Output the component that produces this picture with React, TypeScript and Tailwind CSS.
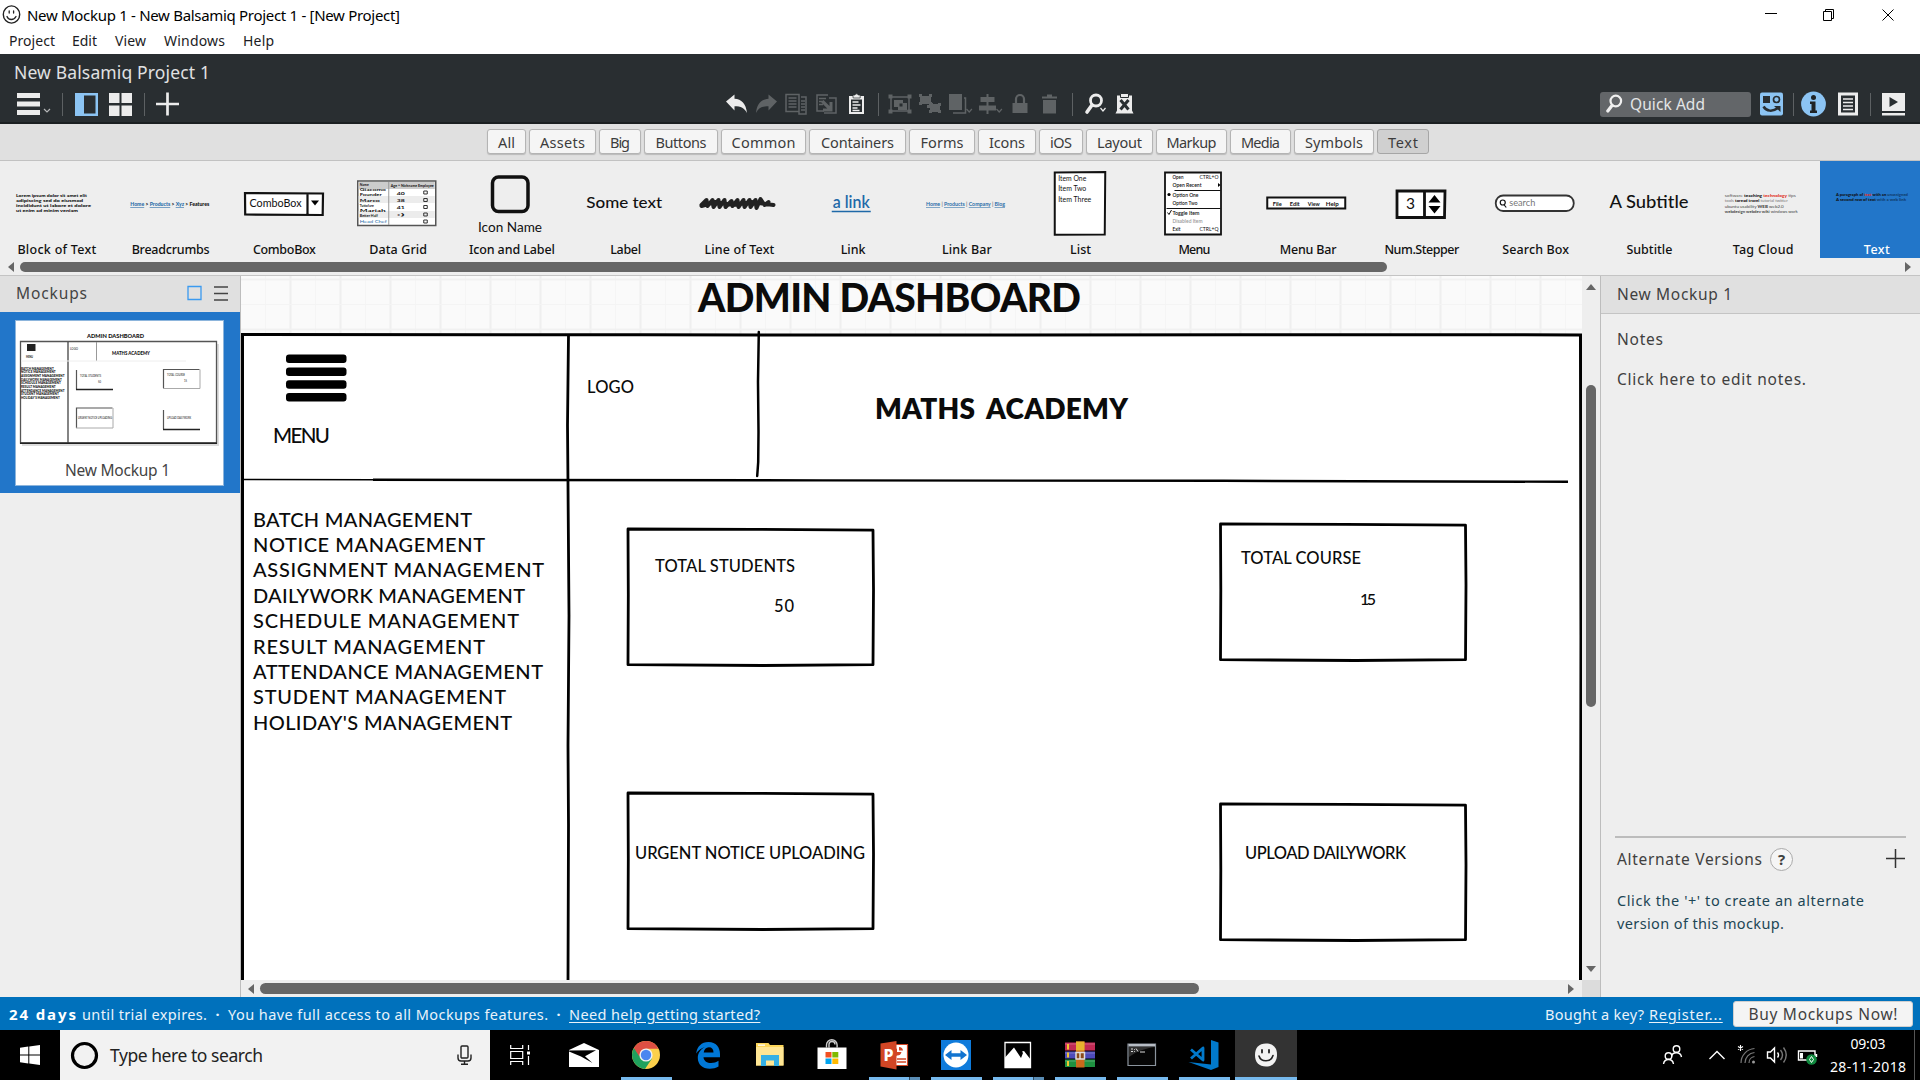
import React, { useLayoutEffect, useRef } from "react";

const UI = "font-['Noto_Sans',sans-serif]";
const SKETCH = "font-['Lato',sans-serif]";

/** Single line of text whose tracking is adjusted so that it spans `w` pixels. */
function Fit({ w, children, className = "" }: { w: number; children: string; className?: string }) {
  const ref = useRef<HTMLSpanElement>(null);
  useLayoutEffect(() => {
    const el = ref.current;
    if (!el) return;
    el.style.letterSpacing = "0px";
    const natural = el.getBoundingClientRect().width;
    const tracking = (w - natural) / Math.max(1, children.length - 1);
    el.style.letterSpacing = `${tracking}px`;
    el.style.marginRight = `${-tracking}px`;
  }, [w, children]);
  return (
    <span ref={ref} className={`inline-block shrink-0 whitespace-pre ${className}`}>
      {children}
    </span>
  );
}

function Cell({ children, w = 30 }: { children: React.ReactNode; w?: number }) {
  return (
    <svg width={w} height={26} viewBox={`0 0 ${w} 26`} className="shrink-0">
      {children}
    </svg>
  );
}

const Sep = ({ className = "" }: { className?: string }) => (
  <div className={`h-[23px] w-px shrink-0 bg-[#5d6163] ${className}`} />
);

const MENUS: [string, number, string][] = [
  ["Project", 46, "ml-[9px]"],
  ["Edit", 25, "ml-[17px]"],
  ["View", 31, "ml-[18px]"],
  ["Windows", 61, "ml-[18px]"],
  ["Help", 31, "ml-[18px]"],
];

function TitleBar() {
  return (
    <div className="flex h-[32px] items-center">
      <svg width="19" height="20" viewBox="0 0 19 20" className="ml-[2px] -mt-[2px]" fill="none" stroke="#222">
        <ellipse cx="9.5" cy="9.5" rx="8.2" ry="8.6" strokeWidth="1.4" />
        <path d="M5 11.5c1.5 4 7 4 9 0M7.2 6v2M11.6 6v2" strokeWidth="1.3" strokeLinecap="round" />
      </svg>
      <Fit w={373} className="ml-[6px] -mt-[3px] text-[15px] leading-[20px] text-black">
        New Mockup 1 - New Balsamiq Project 1 - [New Project]
      </Fit>
      <div className="ml-auto flex w-[155px] items-center">
        <svg width="155" height="28" viewBox="1765 0 155 28" fill="none" stroke="#000" strokeWidth="1">
          <path d="M1765 11.500h12M1823.500 9.500h8v9h-8zM1825.500 9v-1.500h8v9h-2M1882.500 7.500l11 11M1893.500 7.500l-11 11" />
        </svg>
      </div>
    </div>
  );
}

function MenuBar() {
  return (
    <div className="flex h-[22px] items-center text-[14px] leading-[18px] text-[#1c1c24]">
      {MENUS.map(([t, w, m]) => (
        <Fit key={t} w={w} className={`${m} -mt-[4px]`}>
          {t}
        </Fit>
      ))}
    </div>
  );
}

function LeftTools() {
  return (
    <div className="flex w-[722px] items-center">
      <svg width="35" height="26" viewBox="0 0 35 26" className="ml-[17px]">
        <path d="M0 2h23v5H0zM0 10.500h23v5H0zM0 19h23v5H0z" fill="#ececec" />
        <path d="M27 18l3 3 3-3" fill="none" stroke="#b5b7b8" strokeWidth="1.200" />
      </svg>
      <Sep className="ml-[10px]" />
      <svg width="23" height="26" viewBox="0 0 23 26" className="ml-[12px]">
        <path d="M0 2h23v23H0z" fill="#8cc4f3" />
        <path d="M9 4.500h11.500v18H9z" fill="#292e31" />
      </svg>
      <svg width="23" height="26" viewBox="0 0 23 26" className="ml-[11px]">
        <path d="M0 2h10.500v10H0zM12.500 2H23v10H12.500zM0 14.500h10.500v10.500H0zM12.500 14.500H23v10.500H12.500z" fill="#ececec" />
      </svg>
      <Sep className="ml-[12px]" />
      <svg width="23" height="26" viewBox="0 0 23 26" className="ml-[11px]">
        <path d="M0 13h23M11.500 1.500v23" stroke="#ececec" strokeWidth="2.700" />
      </svg>
    </div>
  );
}

function CenterTools() {
  const g = "#5f6365";
  const lt = "#ececec";
  return (
    <div className="flex items-center">
      <Cell>
        <path d="M4 10.500L12.500 3.500v4.300c7 .5 11.500 4.700 12.500 14.200-2.500-5-6-6.800-12.500-6.800v4.300z" fill={lt} />
      </Cell>
      <Cell>
        <path d="M25 10.500L16.500 3.500v4.300C9.500 8.300 5 12.500 4 22c2.500-5 6-6.800 12.500-6.800v4.300z" fill={g} />
      </Cell>
      <Cell>
        <path d="M4 3.500h13v17H4zM19 6h5v17h-7v-2" fill="none" stroke={g} strokeWidth="1.500" />
        <path d="M6.500 7h8M6.500 10h8M6.500 13h8M6.500 16h8M19 10h4M19 13h4M19 16h4M19 19h4" stroke={g} strokeWidth="1.500" />
      </Cell>
      <Cell>
        <path d="M16 4H5v16h7M17 7h7v15H12" fill="none" stroke={g} strokeWidth="1.500" />
        <path d="M7 7.500h7M7 10.500h5M7 13.500h4" stroke={g} strokeWidth="1.500" />
        <path d="M11.500 9l6 6v-4h3v9.500h-9.500v-3h4.300l-6-6z" fill={g} />
      </Cell>
      <Cell>
        <path d="M7 5h15v18H7z" fill={lt} />
        <path d="M11 6V4h2a1.700 1.700 0 013.200 0h2v3h-7z" fill={lt} stroke="#292e31" strokeWidth=".7" />
        <path d="M9 8.500h11v12.500H9z" fill="#292e31" />
        <path d="M10.500 11h6M10.500 14h8M10.500 17h5M10.500 19.500h7" stroke={lt} strokeWidth="1.500" />
      </Cell>
      <div className="flex w-[13px] justify-center">
        <Sep />
      </div>
      <Cell>
        <path d="M6 6h18v14H6z" fill="none" stroke={g} strokeWidth="1.500" />
        <path d="M3.500 3.500h4v4h-4zM22.500 3.500h4v4h-4zM3.500 18.500h4v4h-4zM22.500 18.500h4v4h-4zM9 9h9v3h4v7h-9v-3H9z" fill={g} />
        <path d="M14.500 12.500h3v3h-3z" fill="#292e31" />
      </Cell>
      <Cell>
        <path d="M4 3h3v2h7V3h3v3h-1v5h1v3h-3v-1H7v1H4v-3h1V6H4zM15 12h3v1h5v-1h3v3h-1v4h1v3h-3v-1h-6v1h-3v-3h1v-2h-3v-3h3z" fill={g} />
      </Cell>
      <Cell>
        <path d="M4 3h13v16H4z" fill={g} />
        <path d="M19 7h1.500v15H8" fill="none" stroke={g} strokeWidth="1.500" />
        <path d="M21.500 18l2.700 3 2.700-3" fill="none" stroke={g} strokeWidth="1.200" />
      </Cell>
      <Cell>
        <path d="M11.500 3h2v20h-2zM5.500 6h14v5h-14zM4 14.500h17v5H4z" fill={g} />
        <path d="M21.500 18l2.700 3 2.700-3" fill="none" stroke={g} strokeWidth="1.200" />
      </Cell>
      <Cell>
        <path d="M7.500 12h15v10h-15z" fill={g} />
        <path d="M11 13V8a4 4 0 018 0v5" fill="none" stroke={g} strokeWidth="2.200" />
      </Cell>
      <Cell>
        <path d="M8 9h13v13.500H8zM7 5.500h15v2H7zM12 3.500h5v2h-5z" fill={g} />
      </Cell>
      <div className="flex w-[15px] justify-center">
        <Sep />
      </div>
      <Cell>
        <circle cx="16" cy="9.500" r="5.500" fill="none" stroke={lt} strokeWidth="2.800" />
        <path d="M12 14L7 21" stroke={lt} strokeWidth="3.600" strokeLinecap="round" />
        <path d="M20.500 17l2.500 3 2.500-3" fill="none" stroke={lt} strokeWidth="1.200" />
      </Cell>
      <Cell>
        <path d="M7 4.500h15v15l1.500 3h-18l1.500-3z" fill={lt} />
        <path d="M10.500 2.500h8v4h-8z" fill={lt} stroke="#292e31" />
        <path d="M10.500 9l8 9.500M18.500 9l-8 9.500" stroke="#292e31" strokeWidth="3" />
      </Cell>
    </div>
  );
}

function RightTools() {
  return (
    <div className="ml-auto flex items-center pr-[15px]">
      <div className="flex h-[25px] w-[151px] items-center rounded-[3px] bg-[#636669]">
        <svg width="17" height="20" viewBox="0 0 17 20" className="ml-[6px]" fill="none" stroke="#f0f0f0">
          <circle cx="9.800" cy="7" r="5.300" strokeWidth="2.200" />
          <path d="M6 11.500L1.800 17" strokeWidth="3.200" strokeLinecap="round" />
        </svg>
        <Fit w={75} className="ml-[7px] text-[15.500px] leading-[20px] text-[#e4e5e6]">
          Quick Add
        </Fit>
      </div>
      <svg width="23" height="26" viewBox="0 0 23 26" className="ml-[9px]">
        <rect y="1.500" width="23" height="23" rx="2" fill="#8cc4f3" />
        <path d="M3 5h7v7H3z" fill="#292e31" />
        <circle cx="16.500" cy="8.500" r="3" fill="none" stroke="#292e31" strokeWidth="1.700" />
        <path d="M3.500 15.500c3 5 9 5.500 14.500 1.500" fill="none" stroke="#292e31" strokeWidth="2.500" />
        <path d="M14 15h6.500v6z" fill="#292e31" />
      </svg>
      <Sep className="ml-[10px]" />
      <svg width="25" height="26" viewBox="0 0 25 26" className="ml-[7px]">
        <circle cx="12.500" cy="13" r="12.400" fill="#8cc4f3" />
        <circle cx="12.500" cy="6.500" r="2.500" fill="#1f2325" />
        <path d="M9 10.500h5.500v9H16V22H9v-2.500h1.500v-6.500H9z" fill="#1f2325" />
      </svg>
      <svg width="20" height="26" viewBox="0 0 20 26" className="ml-[12px]">
        <path d="M0 1.500h20v23H0z" fill="#ececec" />
        <path d="M3 4.500h14v17H3z" fill="#292e31" />
        <path d="M5 8h10M5 11.500h10M5 15h10M5 18.500h10" stroke="#ececec" strokeWidth="1.600" />
      </svg>
      <Sep className="ml-[12px]" />
      <svg width="23" height="26" viewBox="0 0 23 26" className="ml-[11px]">
        <path d="M0 2h23v18H0zM0 22h23v2.500H0z" fill="#ececec" />
        <path d="M7.500 6l8.500 5-8.500 5z" fill="#292e31" />
      </svg>
    </div>
  );
}

const FILTERS: [string, string, number][] = [
  ["All", "w-[39px]", 17],
  ["Assets", "w-[67px]", 45],
  ["Big", "w-[42px]", 20],
  ["Buttons", "w-[74px]", 51],
  ["Common", "w-[85px]", 64],
  ["Containers", "w-[97px]", 73],
  ["Forms", "w-[66px]", 43],
  ["Icons", "w-[58px]", 36],
  ["iOS", "w-[44px]", 22],
  ["Layout", "w-[67px]", 45],
  ["Markup", "w-[71px]", 50],
  ["Media", "w-[61px]", 39],
  ["Symbols", "w-[80px]", 58],
  ["Text", "w-[52px]", 30],
];

function FilterBar() {
  return (
    <div className="flex h-[37px] items-start justify-center gap-[3px] border-b border-[#c2c2c2] bg-[#e0e0e0] pt-[5px] pr-[4px]">
      {FILTERS.map(([t, c, w]) => (
        <div
          key={t}
          className={`flex h-[25px] shrink-0 items-center justify-center rounded-[3px] border text-[14.500px] leading-[18px] text-[#3c3c3c] ${c} ${
            t === "Text" ? "border-[#a6a6a6] bg-[#d0d0d0]" : "border-[#b4b4b4] bg-[#f5f5f5] shadow-[0_1px_1px_#bbb]"
          }`}
        >
          <Fit w={w}>{t}</Fit>
        </div>
      ))}
    </div>
  );
}

function SvgText({
  x, y, w, s, children, fill = "#111", weight = 400,
}: { x: number; y: number; w: number; s: number; children: React.ReactNode; fill?: string; weight?: number }) {
  return (
    <text x={x} y={y} textLength={w} lengthAdjust="spacingAndGlyphs" fontSize={s} fill={fill} fontWeight={weight} className={SKETCH}>
      {children}
    </text>
  );
}

const PALETTE: { name: string; w: number; art: React.ReactNode }[] = [
  {
    name: "Block of Text", w: 79,
    art: (
      <>
        <SvgText x={16} y={196.500} w={71} s={4.500} weight={900}>Lorem ipsum dolor sit amet elit</SvgText>
        <SvgText x={16} y={202} w={67} s={4.500} weight={900}>adipiscing sed do eiusmod</SvgText>
        <SvgText x={16} y={207} w={75} s={4.500} weight={900}>incididunt ut labore et dolore</SvgText>
        <SvgText x={16} y={212} w={62} s={4.500} weight={900}>ut enim ad minim veniam</SvgText>
      </>
    ),
  },
  {
    name: "Breadcrumbs", w: 78,
    art: (
      <SvgText x={130} y={206} w={79} s={6} weight={900}>
        <tspan fill="#2a6da8" textDecoration="underline">Home</tspan> &gt; <tspan fill="#2a6da8" textDecoration="underline">Products</tspan> &gt;{" "}
        <tspan fill="#2a6da8" textDecoration="underline">Xyz</tspan> &gt; Features
      </SvgText>
    ),
  },
  {
    name: "ComboBox", w: 63,
    art: (
      <>
        <path d="M244.500 193l78 .5-.3 21.500-77.500-.5zM307 193v22" fill="#fff" stroke="#111" strokeWidth="2.200" />
        <SvgText x={249} y={207} w={52} s={12}>ComboBox</SvgText>
        <path d="M310.500 200.500h8l-4 5z" />
      </>
    ),
  },
  {
    name: "Data Grid", w: 58,
    art: (
      <>
        <path d="M358 181h78v44.500h-78z" fill="#fff" stroke="#555" strokeWidth="1.500" />
        <path d="M359 182h76v7h-76z" fill="#ccc" />
        <path d="M359 196h76v7h-76zM359 211h76v7h-76z" fill="#ececec" />
        <path d="M389 182v43" stroke="#999" />
        {["Name", "Giacomo", "Founder", "Marco", "Tuttofare", "Mariah", "Better Half"].map((t, i) => (
          <SvgText key={t} x={360} y={186 + i * 5.200} w={[9, 26, 22, 20, 14, 26, 18][i]} s={4} weight={700}>{t}</SvgText>
        ))}
        <SvgText x={360} y={223} w={27} s={4} fill="#2a6da8">Head Chef</SvgText>
        <SvgText x={391} y={187} w={43} s={4} weight={700}>Age ^ Nickname Employee</SvgText>
        {["40", "38", "41", ":)"].map((t, i) => (
          <SvgText key={t} x={397} y={194.500 + i * 7.300} w={8} s={4.500} weight={700}>{t}</SvgText>
        ))}
        {[192.500, 200, 207, 214.500, 221.500].map((y) => (
          <path key={y} d={`M424 ${y - 1.500}h3.500v3h-3.500z`} fill="none" stroke="#333" />
        ))}
      </>
    ),
  },
  {
    name: "Icon and Label", w: 86,
    art: (
      <>
        <rect x="492.500" y="177" width="35.500" height="34.500" rx="6" fill="none" stroke="#111" strokeWidth="3.500" />
        <SvgText x={478} y={232} w={64} s={13}>Icon Name</SvgText>
      </>
    ),
  },
  { name: "Label", w: 31, art: <SvgText x={586} y={207.500} w={76} s={16} weight={500}>Some text</SvgText> },
  {
    name: "Line of Text", w: 70,
    art: (
      <path
        d="M701 205l5-5 1 6 5-6 1 7 5-7 1 7 5-7 1 7 6-6 1 5 5-6 1 7 5-7 1 7 5-7 1 7 5-7 1 8 4-9 4 6 4-3M701 206l14-4 18 3 18-3 22 3"
        fill="none" stroke="#222" strokeWidth="4" strokeLinejoin="round" strokeLinecap="round"
      />
    ),
  },
  {
    name: "Link", w: 25,
    art: (
      <>
        <SvgText x={833} y={208} w={37} s={17} fill="#1f69a8" weight={600}>a link</SvgText>
        <path d="M832 211.500h39" stroke="#1f69a8" strokeWidth="1.500" />
      </>
    ),
  },
  {
    name: "Link Bar", w: 50,
    art: (
      <SvgText x={926} y={206} w={79} s={5.500} weight={700} fill="#777">
        <tspan fill="#2a6da8" textDecoration="underline">Home</tspan> | <tspan fill="#2a6da8" textDecoration="underline">Products</tspan> |{" "}
        <tspan fill="#2a6da8" textDecoration="underline">Company</tspan> | <tspan fill="#2a6da8" textDecoration="underline">Blog</tspan>
      </SvgText>
    ),
  },
  {
    name: "List", w: 21,
    art: (
      <>
        <path d="M1054.500 172.500l50.500-.5-.5 62.500-50 .3z" fill="#fff" stroke="#111" strokeWidth="2" />
        <SvgText x={1058} y={180.500} w={28} s={7.500}>Item One</SvgText>
        <SvgText x={1058} y={191} w={28} s={7.500}>Item Two</SvgText>
        <SvgText x={1058} y={202} w={33} s={7.500}>Item Three</SvgText>
      </>
    ),
  },
  {
    name: "Menu", w: 32,
    art: (
      <>
        <path d="M1164.500 172.500h56v62h-56z" fill="#fff" stroke="#111" strokeWidth="1.800" />
        <path d="M1174 190.500h46M1166 208.500h54" stroke="#111" strokeWidth="1.200" />
        {(["Open", "Open Recent", "Option One", "Option Two", "Toggle Item", "Disabled Item", "Exit"] as const).map((t, i) => (
          <SvgText key={t} x={1172} y={[179, 187, 197, 205, 215, 223, 230.500][i]} w={[11, 29, 26, 25, 27, 30, 8][i]} s={5.500} weight={600} fill={i === 5 ? "#999" : "#111"}>{t}</SvgText>
        ))}
        <SvgText x={1199} y={179} w={19} s={5}>CTRL+O</SvgText>
        <SvgText x={1199} y={230.500} w={19} s={5}>CTRL+Q</SvgText>
        <circle cx="1168.500" cy="194.500" r="1.600" />
        <path d="M1167 212.500l1.500 2 2.500-4.500" fill="none" stroke="#111" />
        <path d="M1217.500 183l2.500 2-2.500 2z" />
      </>
    ),
  },
  {
    name: "Menu Bar", w: 57,
    art: (
      <>
        <path d="M1267.500 197.500h78v11h-78z" fill="#fff" stroke="#111" strokeWidth="2" />
        {["File", "Edit", "View", "Help"].map((t, i) => (
          <SvgText key={t} x={[1273, 1290, 1308, 1326][i]} y={205.500} w={[9, 10, 12, 13][i]} s={6} weight={700}>{t}</SvgText>
        ))}
      </>
    ),
  },
  {
    name: "Num.Stepper", w: 75,
    art: (
      <>
        <path d="M1397 191h48l-.5 26.500h-47.500zM1424.500 191v26" fill="#fff" stroke="#111" strokeWidth="2.800" />
        <SvgText x={1406} y={209} w={9} s={16}>3</SvgText>
        <path d="M1428.500 202.500l6-7.500 6 7.500zM1428.500 206l6 7.500 6-7.500z" />
      </>
    ),
  },
  {
    name: "Search Box", w: 67,
    art: (
      <>
        <rect x="1495.500" y="195.500" width="78" height="15.500" rx="7.500" fill="#fff" stroke="#333" strokeWidth="1.800" />
        <circle cx="1502.500" cy="202.500" r="2.500" fill="none" stroke="#111" strokeWidth="1.200" />
        <path d="M1504 205l2 2.500" stroke="#111" strokeWidth="1.200" />
        <SvgText x={1509} y={206} w={26} s={8.500} fill="#777">search</SvgText>
      </>
    ),
  },
  { name: "Subtitle", w: 46, art: <SvgText x={1609} y={207.500} w={79} s={16.500} weight={500}>A Subtitle</SvgText> },
  {
    name: "Tag Cloud", w: 61,
    art: (
      <>
        <SvgText x={1725} y={196.500} w={71} s={4} fill="#555">
          software <tspan fontWeight="900" fill="#111">teaching</tspan> <tspan fontWeight="900" fill="#e0301e">technology</tspan> tips
        </SvgText>
        <SvgText x={1725} y={202} w={63} s={4} fill="#777">
          tools <tspan fontWeight="900" fill="#111">toread travel</tspan> tutorial twitter
        </SvgText>
        <SvgText x={1725} y={207.500} w={59} s={4} fill="#444">
          ubuntu usability <tspan fontWeight="900">WEB</tspan> web2.0
        </SvgText>
        <SvgText x={1725} y={213} w={73} s={4} fill="#444">
          <tspan fontWeight="700">webdesign webdev wiki</tspan> windows work
        </SvgText>
      </>
    ),
  },
  {
    name: "Text", w: 26,
    art: (
      <>
        <SvgText x={1836} y={196} w={72} s={4} weight={900}>
          A paragraph of <tspan fill="#e0301e">text</tspan> with an <tspan fill="#103d6d">unassigned</tspan>
        </SvgText>
        <SvgText x={1836} y={201} w={70} s={4} weight={900}>
          A second row of text <tspan fill="#103d6d">with a web link</tspan>
        </SvgText>
      </>
    ),
  },
];

function Palette() {
  return (
    <div className="flex h-[114px] flex-col">
      <div className="flex h-[97px] overflow-hidden">
        {PALETTE.map((p, i) => (
          <div key={p.name} className={`flex w-[113.75px] shrink-0 flex-col items-center ${p.name === "Text" ? "bg-[#2276c9] text-white" : "text-[#111]"}`}>
            <svg width="113.75" height="81" viewBox={`${i * 113.75} 161 113.75 81`} className="shrink-0">
              {p.art}
            </svg>
            <Fit w={p.w} className="text-[12.500px] leading-[16px] font-medium">
              {p.name}
            </Fit>
          </div>
        ))}
      </div>
      <div className="flex h-[17px] items-center pl-[8px] pr-[9px]">
        <svg width="6" height="10" viewBox="0 0 6 10"><path d="M6 0v10L0 5z" fill="#666" /></svg>
        <div className="ml-[6px] h-[10px] w-[1367px] rounded-full bg-[#666]" />
        <svg width="6" height="10" viewBox="0 0 6 10" className="ml-auto"><path d="M0 0v10l6-5z" fill="#666" /></svg>
      </div>
    </div>
  );
}

const ITEMS: [string, number][] = [
  ["BATCH MANAGEMENT", 217],
  ["NOTICE MANAGEMENT", 230],
  ["ASSIGNMENT MANAGEMENT", 289],
  ["DAILYWORK MANAGEMENT", 270],
  ["SCHEDULE MANAGEMENT", 264],
  ["RESULT MANAGEMENT", 230],
  ["ATTENDANCE MANAGEMENT", 288],
  ["STUDENT MANAGEMENT", 251],
  ["HOLIDAY'S MANAGEMENT", 257],
];

function Thumbnail() {
  return (
    <svg width="207" height="130" viewBox="16 321 207 130" className="shrink-0">
      <SvgText x={87} y={338} w={57} s={6} weight={900}>ADMIN DASHBOARD</SvgText>
      <path d="M22 344h197v102H22z" fill="#ddd" />
      <path d="M20.500 341.500h196v101.500h-196z" fill="#fff" stroke="#555" strokeWidth="1.300" />
      <path d="M20 443.200h197" stroke="#222" strokeWidth="1.500" />
      <path d="M68 342v101" stroke="#333" strokeWidth="1.200" />
      <path d="M96.500 342v19" stroke="#999" />
      <path d="M21 361h165" stroke="#eee" />
      <path d="M27 344h8.500v7H27z" fill="#222" />
      <SvgText x={26} y={358} w={7} s={3.500} weight={700}>MENU</SvgText>
      <SvgText x={70} y={350} w={8} s={3.500}>LOGO</SvgText>
      <SvgText x={112} y={354.500} w={38} s={5} weight={900}>MATHS ACADEMY</SvgText>
      {ITEMS.map(([t, w], i) => (
        <SvgText key={t} x={21} y={369.500 + i * 3.700} w={w * 0.151} s={3} weight={900}>{t}</SvgText>
      ))}
      <path d="M76.500 389.500v-19.500M163.500 388v-18.500h36M76.500 428v-20h36M163.500 429v-19" fill="none" stroke="#555" strokeWidth="1.200" />
      <path d="M76 389.500h37M163 429.500h37" stroke="#222" strokeWidth="1.500" />
      <path d="M163 388.500h37v-19M76 428h37v-20" fill="none" stroke="#aaa" />
      <SvgText x={80} y={376.500} w={21} s={3.500}>TOTAL STUDENTS</SvgText>
      <SvgText x={98} y={383} w={3} s={3.500}>50</SvgText>
      <SvgText x={167} y={375.500} w={18} s={3.500}>TOTAL COURSE</SvgText>
      <SvgText x={184} y={382} w={3} s={3.500}>15</SvgText>
      <SvgText x={78} y={419} w={34} s={3.500}>URGENT NOTICE UPLOADING</SvgText>
      <SvgText x={167} y={419} w={24} s={3.500}>UPLOAD DAILYWORK</SvgText>
    </svg>
  );
}

function MockupsPanel() {
  return (
    <div className="flex w-[241px] shrink-0 flex-col border-r border-[#bdbdbd]">
      <div className="flex h-[36px] items-center bg-[#e0e0e0] text-[#444]">
        <Fit w={71} className="ml-[16px] -mt-[3px] text-[15.500px] leading-[20px]">
          Mockups
        </Fit>
        <svg width="42" height="16" viewBox="0 0 42 16" className="ml-[100px] -mt-[2px]" fill="none">
          <path d="M1 1.500h13v13H1z" stroke="#3b9af0" strokeWidth="1.300" />
          <path d="M27 2h14M27 8.500h14M27 15h14" stroke="#444" strokeWidth="1.400" />
        </svg>
      </div>
      <div className="h-[181px] bg-[#2276c9] pt-[8px] pl-[15px]">
        <div className="flex h-[166px] w-[209px] flex-col items-center border border-[#8db5dc] bg-white">
          <Thumbnail />
          <Fit w={105} className="mt-[9px] mr-[2px] -ml-[4px] text-[15.500px] leading-[20px] text-[#444]">
            New Mockup 1
          </Fit>
        </div>
      </div>
    </div>
  );
}

type Note = { t: string; x: number; cy: number; w: number; c: string };
const NOTES: Note[] = [
  { t: "ADMIN DASHBOARD", x: 698, cy: 297.500, w: 383, c: "text-[39px] font-black" },
  { t: "MATHS ACADEMY", x: 875, cy: 408, w: 253, c: "text-[28px] font-extrabold [word-spacing:5px]" },
  { t: "MENU", x: 273, cy: 435.500, w: 57, c: "text-[20.500px] font-medium" },
  { t: "LOGO", x: 587, cy: 387.500, w: 47, c: "text-[16.500px] font-medium" },
  { t: "TOTAL STUDENTS", x: 655, cy: 566, w: 140, c: "text-[16.500px] font-medium" },
  { t: "50", x: 774, cy: 606, w: 20, c: "text-[16.500px] font-medium" },
  { t: "TOTAL COURSE", x: 1241, cy: 558.500, w: 120, c: "text-[16.500px] font-medium" },
  { t: "15", x: 1360, cy: 598.500, w: 16, c: "text-[16px] font-medium" },
  { t: "URGENT NOTICE UPLOADING", x: 635, cy: 853.500, w: 230, c: "text-[16.500px] font-medium" },
  { t: "UPLOAD DAILYWORK", x: 1245, cy: 853.500, w: 161, c: "text-[16.500px] font-medium" },
  ...ITEMS.map(([t, w], i) => ({ t, x: 253, cy: 518.500 + i * 25.400, w: w + 2, c: "text-[20px] font-medium" })),
];

const BOXES: [number, number][] = [
  [627, 529],
  [1219.500, 524],
  [627, 793],
  [1219.500, 804],
];

function Canvas() {
  return (
    <div className="relative h-[704px] w-[1341px] overflow-hidden bg-[#fafafa]">
      <svg width="1341" height="704" viewBox="241 276 1341 704" fill="none" className="block">
        {Array.from({ length: 53 }, (_, i) => (
          <path key={i} d={`M${265.500 + i * 25} 276v60`} stroke={i % 2 ? "#efefef" : "#f5f5f5"} strokeWidth={i % 2 ? 2 : 1} />
        ))}
        <path d="M241 279.500h1341M241 329.500h1341" stroke="#f1f1f1" strokeWidth="2" />
        <path d="M241 304.500h1341" stroke="#f4f4f4" />
        <path d="M243 335h1338v660H243z" fill="#fff" />
        <path d="M242.500 980V334.500l400 .3 300 .2 300-.3 338 .2.500 300-.5 345" stroke="#000" strokeWidth="3" />
        <path d="M568.500 335l-1 90 .5 60 1 130-1 130 .5 80-.5 155" stroke="#000" strokeWidth="2.800" />
        <path d="M758.800 332l-.8 50 .5 50-.3 30-1 14" stroke="#000" strokeWidth="2.500" strokeLinecap="round" />
        <path d="M243 479.500l130 .2" stroke="#000" strokeWidth="1.600" />
        <path d="M373 479.800l450 .6 400 .4 345 1" stroke="#000" strokeWidth="2.400" />
        {[354.500, 367.500, 380.300, 393].map((y) => (
          <rect key={y} x="286" y={y} width="60.500" height="8.500" rx="3" fill="#000" />
        ))}
        {BOXES.map(([x, y]) => (
          <path
            key={`${x}-${y}`}
            d={`M${x + 1} ${y}l125 .3 120 .9.500 60-.5 74.500-110 .8-135-.8.3-70z`}
            fill="#fff" stroke="#000" strokeWidth="2.800" strokeLinejoin="round"
          />
        ))}
      </svg>
      {NOTES.map((n) => (
        <div
          key={n.t}
          className={`absolute flex h-[40px] items-center leading-none text-[#0b0b0b] ${SKETCH} ${n.c}`}
          style={{ left: n.x - 241, top: n.cy - 276 - 20 }}
        >
          <Fit w={n.w}>{n.t}</Fit>
        </div>
      ))}
    </div>
  );
}

function Workspace() {
  return (
    <div className="flex w-[1359px] shrink-0 flex-col">
      <div className="flex">
        <Canvas />
        <div className="flex w-[18px] flex-col items-center pt-[8px] pb-[8px]">
          <svg width="10" height="6" viewBox="0 0 10 6"><path d="M0 6h10L5 0z" fill="#666" /></svg>
          <div className="mt-[95px] h-[322px] w-[10px] rounded-full bg-[#666]" />
          <svg width="10" height="6" viewBox="0 0 10 6" className="mt-auto"><path d="M0 0h10L5 6z" fill="#666" /></svg>
        </div>
      </div>
      <div className="flex h-[17px]">
        <div className="flex w-[1341px] items-center pl-[7px] pr-[8px]">
          <svg width="6" height="10" viewBox="0 0 6 10"><path d="M6 0v10L0 5z" fill="#666" /></svg>
          <div className="ml-[6px] h-[11px] w-[939px] rounded-full bg-[#666]" />
          <svg width="6" height="10" viewBox="0 0 6 10" className="ml-auto"><path d="M0 0v10l6-5z" fill="#666" /></svg>
        </div>
        <div className="w-[18px] bg-[#dcdcdc]" />
      </div>
    </div>
  );
}

function Inspector() {
  return (
    <div className="flex flex-1 flex-col border-l border-[#bdbdbd] text-[15.500px] leading-[20px] text-[#404040]">
      <div className="flex h-[38px] items-center border-b border-[#c4c4c4] bg-[#e0e0e0] pb-[2px] pl-[16px]">
        <Fit w={115}>New Mockup 1</Fit>
      </div>
      <div className="flex flex-col items-start pt-[15px] pl-[16px]">
        <Fit w={46}>Notes</Fit>
        <Fit w={189} className="mt-[20px]">Click here to edit notes.</Fit>
      </div>
      <div className="mt-auto mr-[14px] ml-[14px] border-t-2 border-[#bcbcbc]" />
      <div className="flex h-[159px] flex-col pl-[16px]">
        <div className="mt-[9px] flex h-[24px] items-center">
          <Fit w={145}>Alternate Versions</Fit>
          <div className="ml-[8px] flex size-[23px] items-center justify-center rounded-full border border-[#aaa] bg-[#f5f5f5] text-[15px] font-bold">?</div>
          <svg width="19" height="20" viewBox="0 0 19 20" className="mr-[15px] ml-auto"><path d="M0 9.500h19M9.500 0v19" stroke="#333" strokeWidth="1.500" /></svg>
        </div>
        <Fit w={247} className="mt-[18px] self-start text-[14.500px] leading-[22.500px] text-[#1d4655]">Click the '+' to create an alternate</Fit>
        <Fit w={167} className="self-start text-[14.500px] leading-[22.500px] text-[#1d4655]">version of this mockup.</Fit>
      </div>
    </div>
  );
}

function TrialBar() {
  return (
    <div className="flex h-[33px] items-center bg-[#0071bc] text-[14.500px] leading-[18px] text-[#eaf3fa]">
      <Fit w={67} className="ml-[9px] text-[15px] font-bold text-white">24 days</Fit>
      <Fit w={125} className="ml-[6px]">until trial expires.</Fit>
      <span className="w-[21px] text-center font-bold">·</span>
      <Fit w={320} className="">You have full access to all Mockups features.</Fit>
      <span className="w-[21px] text-center font-bold">·</span>
      <Fit w={191} className="underline underline-offset-2">Need help getting started?</Fit>
      <Fit w={99} className="ml-auto">Bought a key?</Fit>
      <Fit w={73} className="ml-[5px] underline underline-offset-2">Register...</Fit>
      <div className="mr-[7px] ml-[11px] flex h-[26px] w-[180px] items-center justify-center rounded-[3px] border border-[#cfcfcf] bg-[#f4f4f4] text-[15.500px] leading-[20px] text-[#404040]">
        <Fit w={149}>Buy Mockups Now!</Fit>
      </div>
    </div>
  );
}

const APPS: { id: string; bar: "" | "full" | "split"; art: React.ReactNode }[] = [
  {
    id: "chrome", bar: "full",
    art: (
      <>
        <circle cx="20" cy="20" r="14" fill="#fcd04b" />
        <path d="M7.880 13A14 14 0 0019 34L26 23.500 20 20z" fill="#1fa15d" />
        <path d="M7.880 13A14 14 0 0132.500 13.700H20L13 21z" fill="#dd4f43" />
        <circle cx="20" cy="20" r="6.600" fill="#f1f1f1" />
        <circle cx="20" cy="20" r="5.200" fill="#4a87f0" />
      </>
    ),
  },
  {
    id: "edge", bar: "",
    art: (
      <path
        d="M8.200 18.500C9 11.500 13.500 7 20.500 7c7.500 0 11.500 5.500 11.500 12v3.200H15.500c.3 4 3.800 5.800 7.500 5.800 3 0 5.200-.8 7.500-2.200v5.700c-2.600 1.500-5.600 2.200-8.800 2.200-7.200 0-11.900-4.500-11.900-10.800 0-5 2.900-9 7.500-11-4.100.9-7.100 3.400-9.100 6.600zM15.700 17.500h9.800c0-3.200-1.500-5.200-4.600-5.200-3 0-4.800 2.300-5.200 5.200z"
        fill="#0078d7"
      />
    ),
  },
  {
    id: "explorer", bar: "",
    art: (
      <>
        <path d="M6 8h12.500l1.500 2h13.500v20.500H6z" fill="#fcd659" />
        <path d="M6 12h27.500v18.500H6z" fill="#ffe694" />
        <path d="M8 9.500h7v1.300H8z" fill="#fff" />
        <path d="M11 20h18v11h-5v-5.500h-8V31h-5z" fill="#35b0e5" />
      </>
    ),
  },
  {
    id: "store", bar: "",
    art: (
      <>
        <path d="M14.500 12.500V10a5.300 5.300 0 0110.600 0v2.500M17 12.500V9.500a3 3 0 016 0" fill="none" stroke="#ccc" strokeWidth="1.400" />
        <path d="M5.500 12.500h29V34h-29z" fill="#fff" />
        <path d="M13.500 17h6v5.500h-6z" fill="#f25022" />
        <path d="M20.300 17h6v5.500h-6z" fill="#7fba00" />
        <path d="M13.500 23.500h6V29h-6z" fill="#00a4ef" />
        <path d="M20.300 23.500h6V29h-6z" fill="#ffb900" />
      </>
    ),
  },
  {
    id: "powerpoint", bar: "split",
    art: (
      <>
        <path d="M20 9.500h13.500v21H20z" fill="#fff" stroke="#d24625" strokeWidth="1.200" />
        <path d="M23 24h9M23 27h9" stroke="#d24625" strokeWidth="1.600" />
        <path d="M23 14a4.300 4.300 0 100 6.500 4.500 4.500 0 004.500-3.500h-4.500zM25 12v3.500h4A4 4 0 0025 12z" fill="#d24625" />
        <path d="M6.500 8.500L22.500 6v28.500l-16-3z" fill="#d24625" />
        <text x="9.500" y="26" fontSize="16" fontWeight="800" fill="#fff" className="font-['Noto_Sans',sans-serif]">P</text>
      </>
    ),
  },
  {
    id: "teamviewer", bar: "full",
    art: (
      <>
        <path d="M5 5h30v30H5z" fill="#0f7bdb" />
        <circle cx="20" cy="20" r="12.500" fill="#fff" />
        <path d="M9 20l6.500-5v3.200h9V15l6.500 5-6.500 5v-3.200h-9V25z" fill="#1274d0" />
      </>
    ),
  },
  {
    id: "photos", bar: "split",
    art: (
      <>
        <path d="M7 7.500h25.500V32.500H7z" fill="#000" stroke="#fff" strokeWidth="1.300" />
        <path d="M7 22.500L16 12.500l7 10.500 2-5-1-1.500 2-.5 7 9v8H7z" fill="#fff" />
      </>
    ),
  },
  {
    id: "winrar", bar: "full",
    art: (
      <>
        <path d="M5 7.500h30V15.500H5z" fill="#c22a55" />
        <path d="M5 16.500h30v7H5z" fill="#4d4bbb" />
        <path d="M5 24.500h30v7.500H5z" fill="#1e9140" />
        <path d="M5 9h30M5 18h30M5 26h30" stroke="#fff" strokeOpacity=".25" />
        <path d="M7 9h2v5.500H7zM7 17.500h2v5H7zM7 26h2v5H7z" fill="#f1c531" />
        <path d="M16 6.500h8.500v26H16z" fill="#c96a1c" />
        <path d="M16 6.500h8.500v9H16z" fill="#e8b32e" />
        <path d="M16 17.500h8.500v6.500H16z" fill="#8a4a1a" stroke="#ddd" strokeWidth="1.500" />
        <path d="M20 18v6" stroke="#eee" strokeWidth="1.300" />
      </>
    ),
  },
  {
    id: "terminal", bar: "full",
    art: (
      <>
        <path d="M6 9h27.500v21.500H6z" fill="#060606" stroke="#8b949e" strokeWidth="1.200" />
        <path d="M6.500 9H33v2.500H6.500z" fill="#b6bcc4" />
        <path d="M7 12h26c-9 1.500-18 4-26 10z" fill="#303030" />
        <path d="M9 14h2M9 16.500h2M12.500 14v.8M12.500 16v.8M14 13.500l2 3M18 17h5" stroke="#ddd" strokeWidth="1" />
      </>
    ),
  },
  {
    id: "vscode", bar: "full",
    art: (
      <>
        <path d="M27 5l7.500 2.500v24.500L27 35 4.500 27l22.500 2.500z" fill="#0179cb" />
        <path d="M7 14.500l12 10.500V13L7 23.500" fill="none" stroke="#0179cb" strokeWidth="2.800" strokeLinejoin="round" />
      </>
    ),
  },
  {
    id: "balsamiq", bar: "full",
    art: (
      <>
        <path d="M20 8.500c7 0 11 4 11 11S27 31.500 20 31.500 9 27.500 9 20 13 8.500 20 8.500z" fill="#f3f3f3" />
        <path d="M13 21c2 6.500 12 6.500 14-.5" fill="none" stroke="#222" strokeWidth="1.600" strokeLinecap="round" />
        <path d="M16 15v2.500M23 15v2.500" stroke="#222" strokeWidth="1.800" strokeLinecap="round" />
      </>
    ),
  },
];

function Taskbar() {
  return (
    <div className="flex h-[50px] bg-black">
      <div className="flex w-[60px] items-center justify-center">
        <svg width="20" height="20" viewBox="0 0 20 20"><path d="M0 2.800L8.300 1.600v8H0zM9.300 1.500L20 0v9.600H9.300zM0 10.600h8.300v7.900L0 17.300zM9.300 10.600H20V20L9.300 18.600z" fill="#fff" /></svg>
      </div>
      <div className="flex w-[430px] items-center bg-[#f2f2f2]">
        <svg width="29" height="29" viewBox="0 0 29 29" className="ml-[10px]"><circle cx="14.500" cy="14.500" r="12" fill="none" stroke="#000" strokeWidth="3.200" /></svg>
        <Fit w={153} className="ml-[11px] text-[17.500px] leading-[24px] text-[#222]">Type here to search</Fit>
        <svg width="15" height="20" viewBox="0 0 15 20" className="ml-auto mr-[18px]" fill="none" stroke="#222" strokeWidth="1.400">
          <rect x="4" y="1" width="7" height="12" rx="1" />
          <path d="M1 9.500v3.500a3 3 0 003 3h7a3 3 0 003-3V9.500M7.500 16v3M4 19.300h7" />
        </svg>
      </div>
      <div className="flex w-[125px] items-center">
        <svg width="21" height="20" viewBox="0 0 21 20" className="ml-[20px]" fill="none" stroke="#fff" strokeWidth="1.200">
          <path d="M.7 0v3.500h12V0M.7 6.500h12v7H.7zM.7 20v-3.500h12V20M18.500 0v5M18.500 11v9" />
          <path d="M17 6.500h3v3h-3z" fill="#fff" stroke="none" />
        </svg>
        <svg width="30" height="24" viewBox="0 0 30 24" className="ml-[38px]">
          <path d="M0 7L15 0l15 7v17H0z" fill="#fff" />
          <path d="M0 7.500l27-.3-11 6 7.500 6.800L12 13.500 0 8.500z" fill="#000" />
        </svg>
      </div>
      {APPS.map((a) => (
        <div key={a.id} className={`flex w-[62px] flex-col items-center justify-between ${a.id === "balsamiq" ? "bg-[#333]" : ""}`}>
          <svg width="40" height="40" viewBox="0 0 40 40" className="mt-[5px]">{a.art}</svg>
          <div className={`flex h-[3px] ${a.id === "balsamiq" ? "w-[62px]" : "w-[51px]"}`}>
            {a.bar && <div className="h-full flex-1 bg-[#76b9ed]" />}
            {a.bar === "split" && <div className="h-full w-[11px] border-l border-[#2f4a60] bg-[#5a8db5]" />}
          </div>
        </div>
      ))}
      <div className="ml-auto flex items-center">
        <svg width="160" height="30" viewBox="1660 1040 160 30" fill="none" stroke="#fff" strokeWidth="1.400">
          <circle cx="1676.500" cy="1049" r="3.300" />
          <path d="M1671.500 1056.500c1-5 9-5 10 .5" />
          <circle cx="1668.500" cy="1056" r="3.300" />
          <path d="M1663.500 1064c1-6 9-6 10 0M1709.500 1059l7.500-7.500 7.500 7.500" />
          <path d="M1740.500 1045v6M1738 1046.500l5 3M1743 1046.500l-5 3" strokeWidth="1.100" />
          <path d="M1741 1063a14.500 14.500 0 0113.500-14.500M1745 1063a10.500 10.500 0 019.500-10.500M1749 1063a6.500 6.500 0 015.500-6.500" stroke="#777" strokeWidth="1.200" />
          <circle cx="1753.500" cy="1062" r="1.500" fill="#999" stroke="none" />
          <path d="M1767.500 1052h3l4-4v14l-4-4h-3zM1777.500 1052.500q2 2.500 0 5" />
          <path d="M1780.500 1050q4 5 0 10M1783.500 1047.500q5.500 7.500 0 15" stroke="#777" />
          <path d="M1798.500 1051h16.500v9h-16.500zM1816.500 1054v3" />
          <path d="M1800 1053h3v5.500h-3z" fill="#fff" stroke="none" />
          <circle cx="1811.500" cy="1059.500" r="5.300" fill="#10893e" stroke="none" />
          <path d="M1811.500 1056.500l2 3-2 3-2-3z" strokeWidth="1" />
        </svg>
        <div className="mr-[8px] ml-[10px] flex w-[76px] flex-col items-center text-[14px] leading-[23px] text-white">
          <Fit w={35}>09:03</Fit>
          <Fit w={76}>28-11-2018</Fit>
        </div>
        <div className="mr-[5px] h-[50px] w-px bg-[#555]" />
      </div>
    </div>
  );
}

export default function App() {
  return (
    <div className={`flex h-[1080px] w-[1920px] flex-col overflow-hidden bg-white ${UI}`}>
      <TitleBar />
      <MenuBar />
      <div className="h-[70px] border-b-2 border-[#1b1f21] bg-[#292e31]">
        <div className="flex h-[36px] items-center">
          <Fit w={196} className="ml-[14px] -mt-px text-[17.500px] leading-[22px] text-[#e0e1e2]">New Balsamiq Project 1</Fit>
        </div>
        <div className="flex h-[28px] items-center">
          <LeftTools />
          <CenterTools />
          <RightTools />
        </div>
      </div>
      <FilterBar />
      <div className="flex flex-col bg-[#eee]">
        <Palette />
        <div className="h-px bg-[#c4c4c4]" />
        <div className="flex h-[721px]">
          <MockupsPanel />
          <Workspace />
          <Inspector />
        </div>
      </div>
      <TrialBar />
      <Taskbar />
    </div>
  );
}
